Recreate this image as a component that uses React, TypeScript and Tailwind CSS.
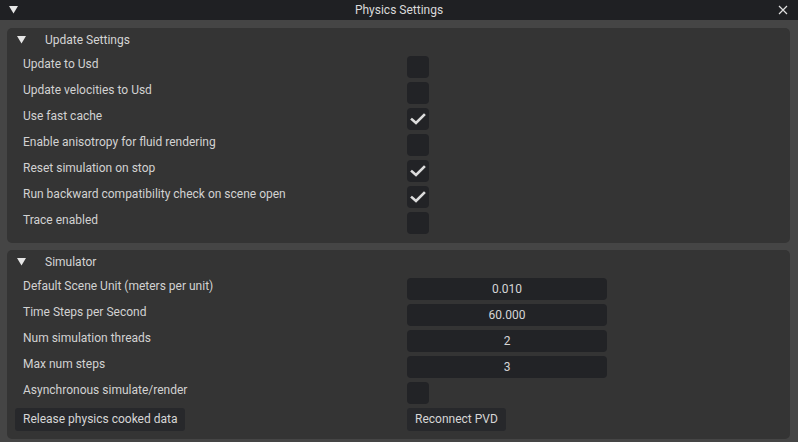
import React from "react"

const checkRows: { label: string; checked: boolean }[] = [
    { label: "Update to Usd", checked: false },
    { label: "Update velocities to Usd", checked: false },
    { label: "Use fast cache", checked: true },
    { label: "Enable anisotropy for fluid rendering", checked: false },
    { label: "Reset simulation on stop", checked: true },
    { label: "Run backward compatibility check on scene open", checked: true },
    { label: "Trace enabled", checked: false },
]

const simRows = [
    { label: "Default Scene Unit (meters per unit)", value: "0.010" },
    { label: "Time Steps per Second", value: "60.000" },
    { label: "Num simulation threads", value: "2" },
    { label: "Max num steps", value: "3" },
]

function Triangle({ className }: { className?: string }) {
    return (
        <svg width="9" height="8" viewBox="0 0 9 8" className={className}>
            <path d="M0 0 H9 L4.5 7.5 Z" fill="#e6e6e6" />
        </svg>
    )
}

function Checkbox({ checked }: { checked: boolean }) {
    return (
        <div className="w-[22px] h-[22px] rounded-[4px] bg-[#222326] flex items-center justify-center">
            {checked && (
                <svg width="16" height="14" viewBox="0 0 16 14">
                    <path d="M2 7.5 L6 11 L14 3" fill="none" stroke="#dcdcdc" strokeWidth="2.6" strokeLinecap="square" />
                </svg>
            )}
        </div>
    )
}

function Section({ title, children }: { title: string; children: React.ReactNode }) {
    return (
        <div className="bg-[#343434] rounded-[5px] pb-[9px]">
            <div className="h-[28px] flex items-start pt-[8px] pl-[10px]">
                <Triangle className="mt-[0px]" />
                <span className="ml-[19px] -mt-[4px] leading-4 text-[#d4d4d4]">{title}</span>
            </div>
            <div className="flex flex-col gap-[4px]">{children}</div>
        </div>
    )
}

function Row({ label, children }: { label: string; children: React.ReactNode }) {
    return (
        <div className="flex items-start h-[22px]">
            <span className="w-[400px] pl-[16px] leading-4 text-[#d2d2d2]">{label}</span>
            {children}
        </div>
    )
}

export default function App() {
    return (
        <div
            className="w-[798px] h-[442px] bg-[#454545] flex flex-col text-[12px] overflow-hidden"
            style={{ fontFamily: "Roboto, 'Liberation Sans', sans-serif" }}
        >
            <div className="h-[20px] bg-[#1f2023] flex items-center relative shrink-0">
                <Triangle className="ml-[9px]" />
                <span className="absolute left-0 right-0 text-center text-[#dadada] leading-5">Physics Settings</span>
                <svg width="10" height="10" viewBox="0 0 10 10" className="absolute right-[10px] top-[5px]">
                    <path d="M1 1 L9 9 M9 1 L1 9" stroke="#e0e0e0" strokeWidth="1.2" />
                </svg>
            </div>

            <div className="flex flex-col gap-[7px] pt-[8px] pl-[7px] pr-[8px]">
                <Section title="Update Settings">
                    {checkRows.map((r) => (
                        <Row key={r.label} label={r.label}>
                            <Checkbox checked={r.checked} />
                        </Row>
                    ))}
                </Section>

                <Section title="Simulator">
                    {simRows.map((r) => (
                        <Row key={r.label} label={r.label}>
                            <div className="w-[200px] h-[22px] rounded-[4px] bg-[#222326] flex items-center justify-center text-[#d6d6d6]">
                                {r.value}
                            </div>
                        </Row>
                    ))}
                    <Row label="Asynchronous simulate/render">
                        <Checkbox checked={false} />
                    </Row>
                    <div className="flex items-center h-[22px]">
                        <div className="w-[400px] pl-[8px]">
                            <button className="h-[23px] px-[8px] rounded-[3px] bg-[#27282b] text-[#d6d6d6]">
                                Release physics cooked data
                            </button>
                        </div>
                        <button className="h-[23px] px-[8px] rounded-[3px] bg-[#27282b] text-[#d6d6d6]">
                            Reconnect PVD
                        </button>
                    </div>
                </Section>
            </div>
        </div>
    )
}
